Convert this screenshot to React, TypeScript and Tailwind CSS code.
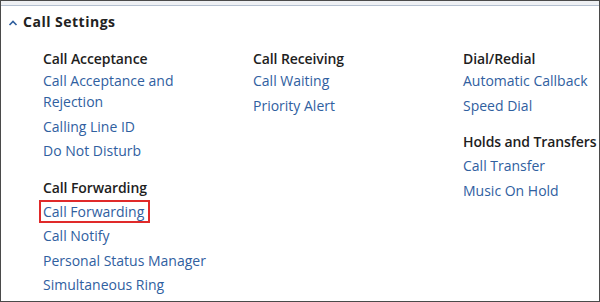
import React from "react";

type Group = { title: string; links: string[] };

const columns: Group[][] = [
  [
    { title: "Call Acceptance", links: ["Call Acceptance and Rejection", "Calling Line ID", "Do Not Disturb"] },
    { title: "Call Forwarding", links: ["Call Forwarding", "Call Notify", "Personal Status Manager", "Simultaneous Ring"] },
  ],
  [{ title: "Call Receiving", links: ["Call Waiting", "Priority Alert"] }],
  [
    { title: "Dial/Redial", links: ["Automatic Callback", "Speed Dial"] },
    { title: "Holds and Transfers", links: ["Call Transfer", "Music On Hold"] },
  ],
];

export default function App() {
  return (
    <div
      className="w-[600px] h-[302px] overflow-hidden bg-white border border-[#4a4a4a] box-border"
      style={{ fontFamily: '"Open Sans", "Noto Sans", sans-serif' }}
    >
      <div className="h-[4px] bg-[#eef0f3]" />
      <div className="h-[1px] bg-[#b4c0d0]" />
      <div className="flex items-center h-[30px] pl-[7px] pt-[1px]">
        <svg width="10" height="8" viewBox="0 0 10 8" className="mt-[2px]">
          <path d="M1.5 6 L5 2.5 L8.5 6" fill="none" stroke="#2f5f9e" strokeWidth="1.6" />
        </svg>
        <span className="ml-[5px] text-[14px] tracking-[0.5px] font-bold text-[#222]">Call Settings</span>
      </div>
      <div className="grid grid-cols-[210px_210px_140px] pl-[42px] pt-[12px]">
        {columns.map((col, ci) => (
          <div key={ci} className="flex flex-col gap-[12px]">
            {col.map((g, gi) => (
              <div key={g.title} className="flex flex-col">
                <div
                  className={
                    "text-[14px] leading-[21px] font-semibold text-[#1e1e1e] tracking-[-0.1px] whitespace-nowrap " +
                    (gi === 0 ? "mb-[1px]" : "mb-[3px]")
                  }
                >
                  {g.title}
                </div>
                {g.links.map((l, li) => {
                  const boxed = ci === 0 && g.title === "Call Forwarding" && li === 0;
                  return (
                    <div key={l} className="text-[14px] leading-[21px] text-[#30609f] mb-[3.5px]">
                      <span className={boxed ? "relative inline-block" : ""}>
                        {l === "Call Acceptance and Rejection" ? (
                          <>
                            Call Acceptance and
                            <br />
                            Rejection
                          </>
                        ) : (
                          l
                        )}
                        {boxed && (
                          <span className="absolute -left-[4px] -right-[6px] -top-[1px] -bottom-[1px] border-2 border-solid border-[#e02a2a]" />
                        )}
                      </span>
                    </div>
                  );
                })}
              </div>
            ))}
          </div>
        ))}
      </div>
    </div>
  );
}
